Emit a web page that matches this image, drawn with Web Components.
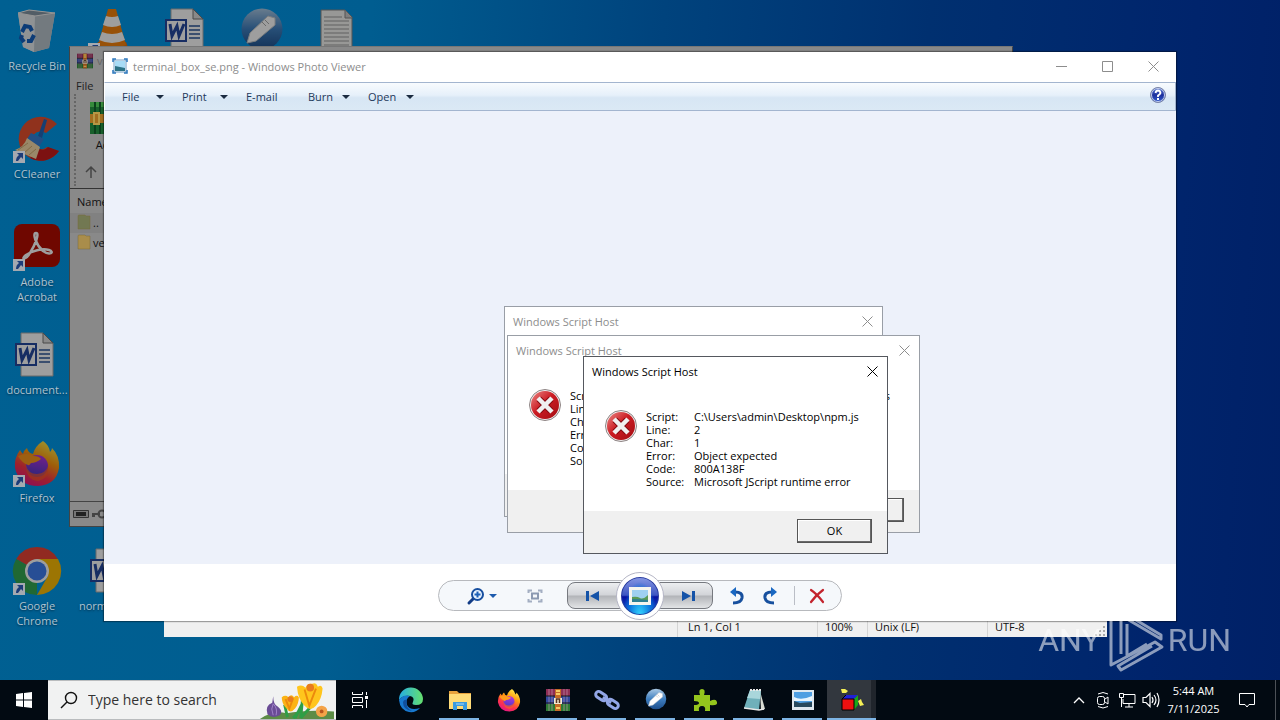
<!DOCTYPE html>
<html lang="en">
<head>
<meta charset="utf-8">
<title>Desktop</title>
<style>
    html, body {
        margin: 0;
        height: 100%;
        overflow: hidden;
        font-family: "Open Sans", "Noto Sans", sans-serif;
        font-size: 11px;
        line-height: 15px;
    }
</style>
</head>
<body>
<desk-top>
    <desk-icon icon="recycle" style="grid-area: 1 / 1">Recycle Bin</desk-icon>
    <desk-icon icon="ccleaner" shortcut style="grid-area: 2 / 1">CCleaner</desk-icon>
    <desk-icon icon="acrobat" shortcut style="grid-area: 3 / 1">Adobe Acrobat</desk-icon>
    <desk-icon icon="word" style="grid-area: 4 / 1">document...</desk-icon>
    <desk-icon icon="firefox" shortcut style="grid-area: 5 / 1">Firefox</desk-icon>
    <desk-icon icon="chrome" shortcut style="grid-area: 6 / 1">Google Chrome</desk-icon>
    <desk-icon icon="vlc" shortcut style="grid-area: 1 / 2"></desk-icon>
    <desk-icon icon="word" align="start" style="grid-area: 6 / 2">norm</desk-icon>
    <desk-icon icon="word" style="grid-area: 1 / 3"></desk-icon>
    <desk-icon icon="usb" style="grid-area: 1 / 4"></desk-icon>
    <desk-icon icon="textfile" style="grid-area: 1 / 5"></desk-icon>

    <archive-window slot="windows"></archive-window>
    <notepad-window slot="windows"></notepad-window>
    <photo-viewer slot="windows" name="terminal_box_se.png"></photo-viewer>

    <script-error slot="windows" style="left: 504px; top: 306px; width: 379px; height: 211px"></script-error>
    <script-error slot="windows" style="left: 507px; top: 335px; width: 413px; height: 198px"
        script="C:\Users\admin\AppData\Local\Temp\term\vendor.js" line="" char="" error="" code="" source=""></script-error>
    <script-error slot="windows" active style="left: 583px; top: 356px; width: 305px; height: 198px"
        script="C:\Users\admin\Desktop\npm.js" line="2" char="1" error="Object expected" code="800A138F" source="Microsoft JScript runtime error"></script-error>

    <any-run-mark slot="windows"></any-run-mark>
    <task-bar slot="taskbar"></task-bar>
</desk-top>

<script>
/** SVG bodies, keyed by icon name. Each entry is [viewBox, markup]. */
const ICONS = {
    recycle: ['0 0 48 48', `
        <path d="M5 6 16 3l26 3-6 35-15 4-11-5z" fill="#e3e9ee"/>
        <path d="M5 6 22 9l-1 36-11-5z" fill="#e6ebef"/><path d="M22 9 42 6l-6 35-15 4z" fill="#b9c4cd"/>
        <path d="M5 6 16 3l26 3-20 3z" fill="#8496a4" stroke="#eee"/>
        <g fill="none" stroke="#1460c0" stroke-width="4"><path d="m9 25 3-6 5 1 2 4"/><path d="m21 28-3 6h-4"/><path d="m11 35-3-4 1-3"/></g>`],
    ccleaner: ['0 0 48 48', `
        <path d="M44 9A22 22 0 1 0 46 36l-12-4a9 9 0 1 1-1-14z" fill="#e8502f"/>
        <path d="M46 36A22 22 0 0 1 17 43l10-9q5 2 8-2z" fill="#c81c1c"/>
        <path d="M31 4 25 21l4 2 5-18z" fill="#2465b9"/><path d="m18 18 13 6-5 8-12-8z" fill="#347fd6"/>
        <path d="m14 23 13 9-4 12-21-9q9-3 12-12z" fill="#f7dcaa"/><path d="m5 35 10-7m-4 10 8-7m-3 9 7-6" stroke="#d0ab70" fill="none"/>`],
    acrobat: ['0 0 48 48', `
        <rect x="1" y="1" width="46" height="43" rx="8" fill="#b30b00"/>
        <path d="M23 10c-4 0 0 12 7 18 7 5 12 1 6-1-7-2-17 1-23 5-6 5 0 5 4-2 5-8 10-20 6-20z" fill="none" stroke="#fff" stroke-width="2.5"/>`],
    word: ['0 0 48 48', `
        <path d="M8 2h22l10 10v33H8z" fill="#fff" stroke="#aaa"/><path d="M30 2v10h10z" fill="#ddd" stroke="#777"/>
        <path d="M26 19h11m-11 4h11m-11 4h11m-11 4h11" stroke="#2b579a" stroke-width="1.5"/>
        <path d="M3 13h20v21H3z" fill="#fff" stroke="#2548a0" stroke-width="2"/>
        <path d="m7 17 2 12 5-10 2 10 5-12" fill="none" stroke="#2548a0" stroke-width="3"/>`],
    firefox: ['0 0 48 48', `
        <defs><linearGradient id="a" x1=".8" y1="0" x2=".3" y2="1"><stop stop-color="#fff44f"/><stop offset=".4" stop-color="#ff980e"/><stop offset=".7" stop-color="#ff3647"/><stop offset="1" stop-color="#e31587"/></linearGradient>
        <linearGradient id="b" x1=".6" y1="0" x2=".4" y2="1"><stop stop-color="#b833e1"/><stop offset="1" stop-color="#4a3cc4"/></linearGradient></defs>
        <path d="M30 2q6 4 7 11 2-2 2-4 8 8 7 20-3 17-21 18Q6 47 2 29q-1-10 5-18 1 2 3 4 1-4 4-6 1 5 6 6 2-8 10-13z" fill="url(#a)"/>
        <circle cx="24" cy="27" r="11" fill="url(#b)"/>
        <path d="M5 17q9-4 16 0 5 0 7 3-5 4-10 4-2 3-3 2-6-2-10-9z" fill="#ff9a1c"/>
        <path d="M13 26q2 9 11 9 9-1 11-8 2 12-10 15-12-1-12-16z" fill="#ff5a2a" opacity=".7"/>`],
    chrome: ['0 0 48 48', `
        <path d="M24 24 3.200 12A24 24 0 0 1 44.800 12z" fill="#ea4335"/>
        <path d="M24 24v24A24 24 0 0 1 3.200 12z" fill="#34a853"/>
        <path d="M24 12h21a24 24 0 0 1-21 36l11-19z" fill="#fbbc05"/>
        <circle cx="24" cy="24" r="12" fill="#fff"/><circle cx="24" cy="24" r="9.500" fill="#3f7df0"/>`],
    vlc: ['0 0 48 48', `
        <path d="M10 35h28l4 11H6z" fill="#e8700c"/><path d="M20 2h8l10 36q-14 7-28 0z" fill="#f5820d"/>
        <path d="m18 9-3 9q9 4 18 0l-3-9q-6 2-12 0zm-4 16-3 8q13 6 26 0l-3-8q-10 4-20 0z" fill="#fff"/>`],
    usb: ['0 0 48 48', `
        <defs><linearGradient id="a" x2="0" y2="1"><stop stop-color="#a9c8e4"/><stop offset=".5" stop-color="#3f7fc0"/><stop offset="1" stop-color="#1e4f8d"/></linearGradient></defs>
        <circle cx="24" cy="22" r="20.500" fill="url(#a)"/>
        <path d="m30 9 7 2v7L18 34l-9 2 3-10z" fill="#fff" stroke="#c5c9cc"/><path d="m24 15 4 4m-1-6 4 4" stroke="#aaa"/>`],
    textfile: ['0 0 48 48', `
        <path d="M8 3h24l7 7v36H8z" fill="#f5f5f2" stroke="#888"/><path d="M32 3v8h7" fill="#ccc" stroke="#888"/>
        <path d="M11 10h18M11 14h25M11 18h25M11 22h25M11 26h25M11 30h25M11 34h25M11 38h25" stroke="#9b9b9b"/>`],
    winrar: ['0 0 24 24', `
        <path d="M0 1h24v7H0z" fill="#8e2e55"/><path d="M0 8h24v8H0z" fill="#31489e"/><path d="M0 16h24v7H0z" fill="#2c7a34"/>
        <path d="M3 1v22M6 1v22M18 1v22M21 1v22" stroke="#c8a2b8" opacity=".6"/>
        <path d="M0 8h24M0 15h24" stroke="#171717"/>
        <path d="M9 1h6v22H9z" fill="#c56b27"/><path d="M10 3h4m-4 3h4m-4 14h4" stroke="#f4cb64" stroke-width="2"/>
        <path d="M8 10h8v6H8z" fill="#f4ead2"/><path d="M10.500 15v-4h3v4" fill="none" stroke="#5a3520" stroke-width="1.500"/>`],
    books: ['0 0 32 32', `
        <path d="M0 0h32v32H0z" fill="#20803a"/><path d="M0 0h32v5H0z" fill="#48b850"/><path d="M5 0v32m5-32v32" stroke="#0f5626" stroke-width="2"/>
        <path d="M0 12h32v9H0z" fill="#d8922a"/><path d="M4 11h5v11H4z" fill="none" stroke="#f4c95c" stroke-width="2"/>`],
    photo: ['0 0 16 16', `
        <path d="M2 2h12v12H2z" fill="#fff" stroke="#6f9cc4"/><path d="M3 3h10v7H3z" fill="#a8dcf6"/><path d="M3 8q5 1 10 2v3H3z" fill="#2c7286"/>
        <path d="M1 4V1h3m8 0h3v3m0 8v3h-3m-8 0H1v-3" fill="none" stroke="#2b77bd" stroke-width="1.500"/>`],
    min: ['0 0 11 11', `<path d="M0 5.500h11" stroke="currentColor"/>`],
    max: ['0 0 11 11', `<path d="M.5.500h10v10H.5z" fill="none" stroke="currentColor"/>`],
    close: ['0 0 11 11', `<path d="m.5.500 10 10m0-10-10 10" stroke="currentColor"/>`],
    help: ['0 0 18 18', `
        <defs><linearGradient id="a" x2="0" y2="1"><stop stop-color="#5c7fd8"/><stop offset=".5" stop-color="#1c2f9c"/><stop offset="1" stop-color="#315ed0"/></linearGradient></defs>
        <circle cx="9" cy="9" r="7.500" fill="url(#a)" stroke="#7c86a6"/><circle cx="9" cy="9" r="6.500" fill="none" stroke="#c6d0ee"/>
        <path d="M6.500 7Q7 4.500 9 4.500T11.500 7Q11 8.500 9 9.500v1.500" fill="none" stroke="#fff" stroke-width="1.800"/><path d="M8 12h2v2H8z" fill="#fff"/>`],
    error: ['0 0 32 32', `
        <defs><linearGradient id="a" x2="1" y2="1"><stop stop-color="#ec8b88"/><stop offset=".45" stop-color="#cc1d24"/><stop offset="1" stop-color="#a30c12"/></linearGradient></defs>
        <circle cx="16" cy="16" r="15.500" fill="#f2eeee" stroke="#8d8484"/><circle cx="16" cy="16" r="14" fill="url(#a)"/>
        <path d="m10 10 12 12m0-12L10 22" stroke="#840b12" stroke-width="6.500"/><path d="m9 9 14 14m0-14L9 23" stroke="#f0f0f0" stroke-width="4.500"/>`],
    zoom: ['0 0 18 18', `<path d="m7 11-5 5" stroke="#123c86" stroke-width="3" stroke-linecap="round"/><circle cx="10.500" cy="7.500" r="5.500" fill="#e8f3ff" stroke="#164e9f" stroke-width="2"/><path d="M10.500 4.500v6m-3-3h6" stroke="#1d61b8" stroke-width="2"/>`],
    fit: ['0 0 16 14', `<path d="M1.500 4V1.500H5m6 0h3.500V4m0 6v2.500H11m-6 0H1.500V10" fill="none" stroke="#a3aec2" stroke-width="2"/><path d="M5 4.500h6v5H5z" fill="none" stroke="#8c9ab2" stroke-width="2"/>`],
    prev: ['0 0 16 12', `<path d="M1 1h3v10H1zM14 1v10L5 6z" fill="#1553a8"/>`],
    next: ['0 0 16 12', `<path d="M12 1h3v10h-3zM2 1v10l9-5z" fill="#1553a8"/>`],
    undo: ['0 0 16 18', `<path d="M6 5q8 0 7 6-1 5-9 5" fill="none" stroke="#17509e" stroke-width="3"/><path d="M1 5 7 0v10z" fill="#1a68c2"/>`],
    redo: ['0 0 16 18', `<path d="M10 5q-8 0-7 6 1 5 9 5" fill="none" stroke="#17509e" stroke-width="3"/><path d="M15 5 9 0v10z" fill="#1a68c2"/>`],
    remove: ['0 0 16 16', `<path d="M2 2q6 4 12 12M14 2Q7 7 2 14" fill="none" stroke="#c3232d" stroke-width="2.200" stroke-linecap="round"/>`],
    play: ['0 0 22 18', `<path d="M0 0h22v18H0z" fill="#f6f4ee"/><path d="M3 3h16v12H3z" fill="#9fd0f0"/><path d="M3 10q5-1 8 1t8-3v7H3z" fill="#5a9b55"/><path d="M3 12q8 0 16 1v2H3z" fill="#2f7f91"/>`],
    start: ['0 0 16 16', `<path d="m0 2 7-1v6.500H0zM8 1l8-1v7.500H8zM0 8.500h7V15l-7-1zM8 8.500h8V16l-8-1z" fill="#fff"/>`],
    search: ['0 0 18 18', `<circle cx="11" cy="7" r="5.500" fill="none" stroke="#111" stroke-width="1.400"/><path d="m7 11-6 6" stroke="#111" stroke-width="1.400"/>`],
    flowers: ['0 0 80 40', `
        <path d="M2 40q14-10 28-6 20-4 50-2v8z" fill="#5d8c46"/>
        <path d="m31 38-3-13m11 14 8-16m-2 16 16-18m-16 18 2-22m-10 22 8-9" stroke="#2e9e46" stroke-width="3" fill="none"/>
        <path d="M16 16q0 9 5 11 6 5 2 9-8 4-13-1-3-9 5-12z" fill="#6a4c96"/><path d="M16 24q-3 5 0 12m0-12q5 5 3 12" stroke="#a184c9" fill="none"/>
        <path d="M25 17q4-3 7 0 3-4 6 0 3-3 5 0 0 7-4 12-5 6-9 0-5-5-5-12z" fill="#fbb315"/>
        <path d="M41 6q5-3 9 1 2-5 7-4 4-2 6 3 4-3 5 2-1 12-7 18-6 7-12 0-7-7-8-20z" fill="#ffc51d"/>
        <path d="m49 9 5 17 7-18m-32 11 4 10 4-11" stroke="#ec8a0c" stroke-width="2" fill="none"/><circle cx="55" cy="7" r="4" fill="#e87b1e"/><circle cx="34" cy="19" r="3" fill="#e87b1e"/>
        <circle cx="67" cy="32" r="6" fill="#f4a348"/><circle cx="67" cy="32" r="2" fill="#b9551d"/>`],
    taskview: ['0 0 16 16', `<path d="M.5 0v2.500h10V0M.5 16v-2.500h10V16M.5 5.500h10v5H.5zM14.500 0v3m0 5v8" fill="none" stroke="#fff"/><path d="M13 4h3v3h-3z" fill="#fff"/>`],
    edge: ['0 0 24 24', `
        <defs><linearGradient id="a" x2="1"><stop stop-color="#25aee5"/><stop offset="1" stop-color="#65e06d"/></linearGradient></defs>
        <path d="M0 12A12 12 0 0 1 24 11q0 6-7 6-5 0-3-3 2-5-3-6Q4 7 0 12z" fill="url(#a)"/>
        <path d="M0 12q4-6 11-4-5 3-3 9 3 6 13 3-4 5-11 4Q1 22 0 12z" fill="#1879cf"/><path d="M8 12q-2 8 5 11-9-1-9-9 1-3 4-2z" fill="#104e9c"/>`],
    explorer: ['0 0 24 24', `<path d="M1 3h8l2 2h12v16H1z" fill="#e8a33d"/><path d="M1 6h22v15H1z" fill="#ffdc78"/><path d="M5 14h14v8h-4v-4H9v4H5z" fill="#3a9be0"/><path d="M8 16h8" stroke="#a9d7f8"/>`],
    link: ['0 0 24 24', `<g fill="none" stroke="#92a6e7" stroke-width="3" transform="rotate(34 12 12)"><rect x="-1" y="9" width="12" height="6" rx="3"/><rect x="13" y="9" width="12" height="6" rx="3"/><path d="M7 12h10"/></g>`],
    puzzle: ['0 0 24 24', `<path d="M1 7h6q-2-6 2-6t2 6h6v6q6-3 7 1t-7 3v6h-5q1-5-3-5t-3 5H1v-6q5 0 5-2t-5-2z" fill="#94c51d"/>`],
    notepad: ['0 0 24 24', `<path d="m18 3 5 18-4 1z" fill="#d9dcd4"/><path d="M8 2h11l-2 20-15-2z" fill="#6fb0ba"/><path d="M8 2h11l-1 9-13-1z" fill="#a9d6db"/><path d="m2 20 15 2 5-1" fill="none" stroke="#e8e8e8" stroke-width="1.500"/><path d="M8 2h11" stroke="#e8e8e8" stroke-width="2" stroke-dasharray="2 1"/>`],
    picture: ['0 0 24 24', `<path d="M1 2h22v20H1z" fill="#dfe8ef"/><path d="M3 4h18v15H3z" fill="#4f9fe2"/><path d="M3 9q7 4 18-1v5H3z" fill="#e9f5fd"/><path d="m3 13 6 2 12-1v5H3z" fill="#28495d"/>`],
    cube: ['0 0 24 24', `<path d="M2 11h12v11H2z" fill="#ef1010"/><path d="m2 11 4-4h12l-4 4z" fill="#2020d8"/><path d="m14 11 4-4v10l-4 5z" fill="#18a818"/><path d="M2 11h12v11M6 7l-4 4v11h12" fill="none" stroke="#000"/><path d="M1 1h4l3 2-2 2H2zm17 12 3-2 1 3 2 3-4 1z" fill="#f5ef55"/>`],
    chevron: ['0 0 12 12', `<path d="m1 9 5-5 5 5" fill="none" stroke="#fff" stroke-width="1.300"/>`],
    meet: ['0 0 16 16', `<g fill="none" stroke="#fff"><rect x="2.500" y="4.500" width="7" height="8" rx="2"/><path d="m10 7 3-2v7l-3-2M3 2q5-3 10 0M3 14.500q5 3 10 0"/></g>`],
    network: ['0 0 18 16', `<g fill="none" stroke="#fff"><path d="M6 2.500h11v9H5V7m6 5v3m-4 0h8"/><path d="M1.500 1.500h4v4h-4zM3.500 6v9"/></g>`],
    volume: ['0 0 18 16', `<path d="M1 5.500h3l4-4v13l-4-4H1zM10 5q2 3 0 6m2-8q4 5 0 10m3-12q4 7 0 14" fill="none" stroke="#fff" stroke-width="1.200"/>`],
    notice: ['0 0 16 16', `<path d="M.5 1.500h15v11H10L8 15l-2-2.500H.5z" fill="none" stroke="#fff"/>`],
    up: ['0 0 12 12', `<path d="M6 12V1M1 6l5-5 5 5" fill="none" stroke="#444" stroke-width="1.500"/>`],
    folder: ['0 0 14 16', `<path d="M1 2q0-1 1-1h6l1 1h4v13H1z" fill="currentColor" stroke="#7a6a3a" stroke-width=".5"/>`],
    drive: ['0 0 34 12', `<path d="M.5 2.500h15v7H.5z" fill="#777" stroke="#333"/><path d="M3 4h10v4H3z" fill="#222"/><path d="M19 5h8v2h-8zm0 2v2h3V7" fill="#444"/><circle cx="29" cy="6" r="3.500" fill="none" stroke="#444" stroke-width="2"/>`],
    anyrun: ['0 0 56 64', `<path d="M12 46V3l40 24v4L18 11M10 4 2 12v45l44-23 7 5-41 23-3-4 34-20M18 16v32l20-12" fill="none" stroke="#fff" stroke-width="3" stroke-linejoin="round"/>`]
};

/**
 * Base class: fills an open shadow root with the string from render()
 * @extends {HTMLElement}
 */
class BaseElement extends HTMLElement {
    connectedCallback() {
        if (!this.shadowRoot) {
            this.attachShadow({ mode: 'open' });
        }
        this.shadowRoot.innerHTML = this.render();
    }

    /** @returns {string} */
    attr(name) {
        return this.getAttribute(name) || '';
    }
}

/** Inline SVG picked from ICONS by its name attribute */
class UiIcon extends BaseElement {
    render() {
        const [box, body] = ICONS[this.attr('name')];
        return `
            <style>
                :host { display: block; flex: none; width: 16px; height: 16px; }
                svg { display: block; width: 100%; height: 100%; overflow: visible; }
            </style>
            <svg viewBox="${box}" aria-hidden="true">${body}</svg>
        `;
    }
}

/** Wallpaper, the icon grid, the free window area and the taskbar */
class DeskTop extends BaseElement {
    render() {
        return `
            <style>
                :host {
                    display: flex;
                    flex-direction: column;
                    position: relative;
                    height: 100vh;
                    overflow: hidden;
                    background: linear-gradient(94deg, #006092 0%, #005d90 28%, #00437d 50%, #003070 70%, #00246c 90%, #002066 100%);
                }
                .icons {
                    flex: 1;
                    display: grid;
                    grid-template-columns: 74px repeat(4, 75px);
                    grid-template-rows: repeat(6, 108px);
                    padding-top: 7px;
                    box-sizing: border-box;
                    min-height: 0;
                }
            </style>
            <div class="icons"><slot></slot></div>
            <slot name="windows"></slot>
            <slot name="taskbar"></slot>
        `;
    }
}

class DeskIcon extends BaseElement {
    render() {
        const arrow = this.hasAttribute('shortcut')
            ? '<svg class="arrow" viewBox="0 0 12 12"><path d="M0 0h12v12H0z" fill="#a4a9b0"/><path d="M4 2h6v6L8 6 5 10H3q0-4 3-6z" fill="#1d3c78"/></svg>'
            : '';
        return `
            <style>
                :host {
                    display: flex;
                    flex-direction: column;
                    align-items: center;
                    color: #aec3d1;
                    text-align: center;
                    text-shadow: 0 1px 2px #00304c;
                }
                :host([align="start"]) .label { align-self: flex-start; padding-left: 5px; }
                .picture { position: relative; }
                ui-icon { width: 48px; height: 48px; filter: brightness(.62); }
                .arrow { position: absolute; left: 0; bottom: 0; width: 12px; height: 12px; }
                .label { margin-top: 3px; max-width: 66px; }
            </style>
            <div class="picture"><ui-icon name="${this.attr('icon')}"></ui-icon>${arrow}</div>
            <span class="label"><slot></slot></span>
        `;
    }
}

/** Archive manager behind the viewer, dimmed by its busy state */
class ArchiveWindow extends BaseElement {
    render() {
        return `
            <style>
                :host {
                    position: absolute;
                    left: 69px;
                    right: 267px;
                    top: 46px;
                    height: 481px;
                    display: flex;
                    flex-direction: column;
                    background: #898989;
                    border: 1px solid #444;
                    border-top-color: #777;
                    box-sizing: border-box;
                    color: #111;
                }
                .title { display: flex; align-items: center; gap: 4px; height: 27px; padding-left: 7px; color: #666; }
                .title ui-icon { filter: brightness(.75); }
                .menu { height: 20px; padding: 3px 0 0 6px; box-sizing: border-box; color: #222; }
                .menu button { display: block; border: 0; padding: 0; background: none; font: inherit; color: inherit; line-height: 17px; }
                .tools { display: flex; height: 64px; margin-left: 4px; border-left: 2px dotted #666; padding-left: 12px; }
                .tool { display: flex; flex-direction: column; align-items: center; width: 36px; padding: 8px 0; border: 0; background: none; font: inherit; color: inherit; }
                .tool ui-icon { width: 32px; height: 32px; margin-bottom: 3px; filter: brightness(.75); }
                .path { display: flex; align-items: center; height: 28px; margin-left: 4px; border-left: 2px dotted #666; padding-left: 9px; }
                .path ui-icon { width: 12px; height: 12px; }
                .list { flex: 1; margin-top: 2px; border-top: 1px solid #333; border-bottom: 1px solid #444; }
                table { width: 100%; border-collapse: collapse; text-align: left; }
                th { height: 24px; padding: 0 7px; font-weight: 400; }
                td { height: 20px; padding: 0 7px; }
                .up { background: #818181; }
                .entry { display: flex; gap: 2px; align-items: center; height: 18px; margin-bottom: 2px; }
                .entry ui-icon { width: 14px; height: 16px; color: #a98d4b; }
                .up ui-icon { color: #727852; }
                .status { display: flex; align-items: center; height: 24px; padding-left: 3px; }
                .status ui-icon { width: 34px; height: 12px; }
            </style>
            <div class="title"><ui-icon name="winrar"></ui-icon>v</div>
            <div class="menu"><button>File</button></div>
            <div class="tools"><button class="tool"><ui-icon name="books"></ui-icon>Add</button></div>
            <div class="path"><ui-icon name="up"></ui-icon></div>
            <div class="list">
                <table>
                    <tr><th>Name</th></tr>
                    <tr class="up"><td><div class="entry"><ui-icon name="folder"></ui-icon>..</div></td></tr>
                    <tr><td><div class="entry"><ui-icon name="folder"></ui-icon>ve</div></td></tr>
                </table>
            </div>
            <div class="status"><ui-icon name="drive"></ui-icon></div>
        `;
    }
}

/** Text editor behind the viewer, only its status bar shows */
class NotepadWindow extends BaseElement {
    render() {
        return `
            <style>
                :host {
                    position: absolute;
                    left: 164px;
                    right: 173px;
                    bottom: 83px;
                    height: 120px;
                    display: flex;
                    flex-direction: column;
                    justify-content: flex-end;
                    background: #fff;
                    color: #111;
                }
                .status { display: flex; justify-content: flex-end; height: 21px; background: #f0f0f0; }
                span { box-sizing: border-box; border-left: 1px solid #d4d4d4; padding: 3px 0 0 7px; }
                .pos { width: 140px; padding-left: 10px; }
                .zoom { width: 50px; }
                .eol { width: 120px; }
                .enc { width: 108px; }
                .grip { align-self: flex-end; width: 12px; height: 12px; }
            </style>
            <div class="status">
                <span class="pos">Ln 1, Col 1</span>
                <span class="zoom">100%</span>
                <span class="eol">Unix (LF)</span>
                <span class="enc">UTF-8</span>
                <svg class="grip" viewBox="0 0 12 12"><path d="M8 1h2v2H8zM4 5h2v2H4zm4 0h2v2H8zM0 9h2v2H0zm4 0h2v2H4zm4 0h2v2H8z" fill="#a8a8a8"/></svg>
            </div>
        `;
    }
}

/** Title bar shared by the viewer and the dialogs */
class TitleBar extends BaseElement {
    render() {
        const buttons = (this.attr('buttons') || 'close').split(' ');
        return `
            <style>
                :host { display: flex; align-items: center; height: 30px; padding-bottom: 2px; box-sizing: border-box; flex: none; background: #fff; color: #8d8d8d; }
                .text { flex: 1; display: flex; align-items: center; gap: 5px; padding-left: 8px; white-space: nowrap; }
                button { display: flex; align-items: center; justify-content: center; width: 46px; height: 27px; border: 0; padding: 0; background: none; color: inherit; }
                :host([small]) button { width: 30px; }
                ui-icon { width: 11px; height: 11px; }
            </style>
            <div class="text"><slot></slot></div>
            ${buttons.map((name) => `<button aria-label="${name}"><ui-icon name="${name}"></ui-icon></button>`).join('')}
        `;
    }
}

class PhotoViewer extends BaseElement {
    render() {
        return `
            <style>
                :host {
                    position: absolute;
                    inset: 52px 104px 99px;
                    display: flex;
                    flex-direction: column;
                    background: #fff;
                    box-shadow: 0 0 1px 1px rgba(0, 0, 0, .35);
                }
                nav {
                    display: flex;
                    align-items: center;
                    height: 29px;
                    box-sizing: border-box;
                    padding: 0 8px 0 9px;
                    border: 1px solid #a3b5cf;
                    border-left-color: #fff;
                    background: linear-gradient(#f8fbfe, #e6f0fa 45%, #d7e6f4 55%, #dbe9f5);
                }
                nav button {
                    display: flex;
                    align-items: center;
                    justify-content: space-between;
                    width: 64px;
                    padding: 0 10px 0 8px;
                    border: 0;
                    background: none;
                    font: inherit;
                    color: #1e395b;
                }
                nav .short { width: 60px; }
                nav .plain { width: 62px; }
                nav .help { width: 18px; padding: 0 0 3px; margin-left: auto; }
                .help ui-icon { width: 18px; height: 18px; }
                .caret { width: 0; border: 4px solid transparent; border-top-color: #1b2b40; border-bottom-width: 0; }
                .canvas { flex: 1; background: #edf1fa; }
                footer { display: flex; align-items: center; justify-content: center; height: 57px; }
                .bar {
                    display: flex;
                    align-items: center;
                    box-sizing: border-box;
                    height: 31px;
                    margin-top: 6px;
                    padding: 0 8px 0 14px;
                    border: 1px solid #b7b9bd;
                    border-radius: 16px;
                    background: #f5f8fb;
                }
                .bar button {
                    display: flex;
                    align-items: center;
                    justify-content: center;
                    gap: 4px;
                    width: 33px;
                    height: 29px;
                    border: 0;
                    padding: 0;
                    background: none;
                }
                .bar .zoom { width: 58px; }
                .zoom ui-icon, .turn ui-icon { width: 18px; height: 18px; }
                .zoom .caret { border-top-color: #1d5bad; }
                .bar .fit { width: 48px; }
                .group { display: flex; align-items: center; margin: 0 7px 0 8px; }
                .bar .step {
                    width: 54px;
                    height: 27px;
                    border: 1px solid #76797f;
                    background: linear-gradient(#eceef0, #d2d4d8 48%, #b2b4b8 52%, #e2e4e6);
                }
                .bar .prev { border-radius: 8px 0 0 8px; padding-right: 3px; }
                .bar .next { border-radius: 0 8px 8px 0; padding-left: 3px; }
                .bar .play {
                    position: relative;
                    width: 48px;
                    height: 48px;
                    margin: -9px -5px;
                    border: 1px solid #b5b6c6;
                    border-radius: 50%;
                    background: radial-gradient(ellipse at 50% 100%, #35d8ff, #0b72dc 40%, transparent 60%) content-box, linear-gradient(#8c9ce6, #3d55c2 48%, #0810a0 52%, #1070dd) content-box, #fff;
                    padding: 3px;
                }
                .play::before { content: ""; position: absolute; inset: 2px; border: 2px solid #fff; border-radius: 50%; box-shadow: inset 0 0 0 1px #2a3c9c, 0 0 0 1px #fff; }
                .play ui-icon { width: 22px; height: 18px; }
                .rule { width: 1px; height: 19px; margin: 0 5px 0 8px; background: #babec6; }
            </style>
            <title-bar buttons="min max close"><ui-icon name="photo"></ui-icon><span>${this.attr('name')} - Windows Photo Viewer</span></title-bar>
            <nav>
                <button class="short">File<i class="caret"></i></button>
                <button>Print<i class="caret"></i></button>
                <button class="plain">E-mail</button>
                <button class="short">Burn<i class="caret"></i></button>
                <button>Open<i class="caret"></i></button>
                <button class="help" aria-label="Help"><ui-icon name="help"></ui-icon></button>
            </nav>
            <div class="canvas"></div>
            <footer>
                <div class="bar">
                    <button class="zoom" aria-label="Zoom"><ui-icon name="zoom"></ui-icon><i class="caret"></i></button>
                    <button class="fit" aria-label="Fit to window"><ui-icon name="fit"></ui-icon></button>
                    <div class="group">
                        <button class="step prev" aria-label="Previous"><ui-icon name="prev"></ui-icon></button>
                        <button class="play" aria-label="Slide show"><ui-icon name="play"></ui-icon></button>
                        <button class="step next" aria-label="Next"><ui-icon name="next"></ui-icon></button>
                    </div>
                    <button class="turn" aria-label="Rotate left"><ui-icon name="undo"></ui-icon></button>
                    <button class="turn" aria-label="Rotate right"><ui-icon name="redo"></ui-icon></button>
                    <i class="rule"></i>
                    <button aria-label="Delete"><ui-icon name="remove"></ui-icon></button>
                </div>
            </footer>
        `;
    }
}

/** Message box of Windows Script Host */
class ScriptError extends BaseElement {
    render() {
        const rows = ['Script', 'Line', 'Char', 'Error', 'Code', 'Source']
            .filter((label) => this.hasAttribute(label.toLowerCase()))
            .map((label) => `<dt>${label}:</dt><dd>${this.attr(label.toLowerCase())}</dd>`)
            .join('');
        return `
            <style>
                :host {
                    position: absolute;
                    display: flex;
                    flex-direction: column;
                    box-sizing: border-box;
                    border: 1px solid #999ea6;
                    background: #fff;
                    color: #000;
                }
                :host([active]) { border-color: #55585e; }
                :host([active]) title-bar { color: #000; }
                .body { flex: 1; display: flex; gap: 9px; padding: 23px 21px 0; }
                .body ui-icon { width: 32px; height: 32px; }
                dl { display: grid; grid-template-columns: 48px 1fr; grid-auto-rows: 13px; margin: 0; line-height: 13px; white-space: nowrap; }
                dd { margin: 0; }
                .foot { display: flex; justify-content: flex-end; align-items: flex-start; height: 42px; padding: 8px 15px 0; background: #f0f0f0; box-sizing: border-box; }
                button {
                    width: 75px;
                    height: 24px;
                    border: 1px solid #555;
                    padding: 0 0 2px;
                    background: #f0f0f0;
                    box-shadow: inset -1px -1px #6a6a6a, inset 1px 1px #fff;
                    font: inherit;
                    color: #000;
                }
            </style>
            <title-bar small>Windows Script Host</title-bar>
            <div class="body">${rows ? `<ui-icon name="error"></ui-icon><dl>${rows}</dl>` : ''}</div>
            <div class="foot">${rows ? '<button>OK</button>' : ''}</div>
        `;
    }
}

class AnyRunMark extends BaseElement {
    render() {
        return `
            <style>
                :host {
                    position: absolute;
                    right: 49px;
                    bottom: 48px;
                    display: flex;
                    align-items: center;
                    color: #fff;
                    opacity: .55;
                    font: 32px/64px "Roboto", sans-serif;
                }
                ui-icon { width: 56px; height: 64px; margin: 0 3px 0 8px; }
            </style>
            <span>ANY</span><ui-icon name="anyrun"></ui-icon><span>RUN</span>
        `;
    }
}

class TaskBar extends BaseElement {
    render() {
        const apps = ['edge', 'explorer', 'firefox', 'winrar', 'link', 'usb', 'puzzle', 'notepad', 'picture', 'cube'];
        const closed = ['edge', 'firefox'];
        const state = (name) => (closed.includes(name) ? '' : name === 'cube' ? 'open active' : 'open');
        return `
            <style>
                :host { display: flex; flex: none; height: 40px; background: #020a12; color: #fff; }
                button { display: flex; align-items: center; justify-content: center; border: 0; padding: 0; background: none; color: inherit; font: inherit; }
                .start { width: 48px; }
                .search { display: flex; align-items: center; box-sizing: border-box; width: 288px; padding-left: 12px; background: #f1f2f2; border: 1px solid #b9bcbe; border-width: 1px 0; color: #333; }
                .search ui-icon { width: 18px; height: 18px; }
                input { flex: 1; min-width: 0; margin-left: 10px; padding: 0; border: 0; outline: 0; background: none; font: 14px/22px "Open Sans", sans-serif; }
                input::placeholder { color: #333; opacity: 1; }
                .search .art { width: 80px; height: 38px; }
                .view { width: 48px; margin-right: 2px; }
                .app { position: relative; width: 49px; }
                .app ui-icon { width: 24px; height: 24px; }
                .open::after { content: ""; position: absolute; bottom: 0; left: 4px; right: 5px; height: 2px; background: #7db4e4; }
                .active { background: linear-gradient(90deg, #32373e 44px, #20252c 44px); }
                .active::after { left: 0; right: 0; }
                .tray { display: flex; align-items: center; margin-left: auto; }
                .tray button { width: 24px; height: 40px; }
                .tray .wide ui-icon { width: 18px; }
                .tray .clock { width: 61px; flex-direction: column; line-height: 18px; }
                .tray .notice { width: 46px; }
                .peek { width: 5px; height: 40px; margin-left: 5px; box-sizing: border-box; border-left: 1px solid #4c5157; }
                .small { width: 12px; height: 12px; }
            </style>
            <button class="start" aria-label="Start"><ui-icon name="start"></ui-icon></button>
            <label class="search">
                <ui-icon name="search"></ui-icon>
                <input type="text" placeholder="Type here to search" aria-label="Search">
                <ui-icon class="art" name="flowers"></ui-icon>
            </label>
            <button class="view" aria-label="Task view"><ui-icon name="taskview"></ui-icon></button>
            ${apps.map((name) => `<button class="app ${state(name)}" aria-label="${name}"><ui-icon name="${name}"></ui-icon></button>`).join('')}
            <div class="tray">
                <button aria-label="Hidden icons"><ui-icon class="small" name="chevron"></ui-icon></button>
                <button aria-label="Meet now"><ui-icon name="meet"></ui-icon></button>
                <button class="wide" aria-label="Network"><ui-icon name="network"></ui-icon></button>
                <button class="wide" aria-label="Volume"><ui-icon name="volume"></ui-icon></button>
                <button class="clock"><span>5:44 AM</span><span>7/11/2025</span></button>
                <button class="notice" aria-label="Notifications"><ui-icon name="notice"></ui-icon></button>
                <i class="peek"></i>
            </div>
        `;
    }
}

customElements.define('ui-icon', UiIcon);
customElements.define('title-bar', TitleBar);
customElements.define('desk-top', DeskTop);
customElements.define('desk-icon', DeskIcon);
customElements.define('archive-window', ArchiveWindow);
customElements.define('notepad-window', NotepadWindow);
customElements.define('photo-viewer', PhotoViewer);
customElements.define('script-error', ScriptError);
customElements.define('any-run-mark', AnyRunMark);
customElements.define('task-bar', TaskBar);
</script>
</body>
</html>
